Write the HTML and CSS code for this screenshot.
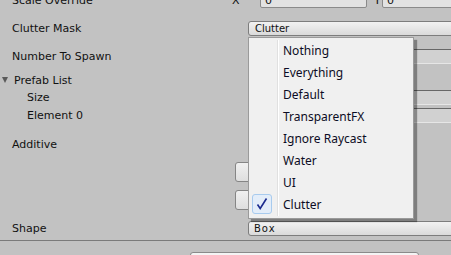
FILE: index.html
```html
<!DOCTYPE html>
<html>
<head>
<meta charset="utf-8">
<link rel="stylesheet" href="styles.css">
</head>
<body>
<div class="inspector">
  <div class="row row-scale">
    <span class="label label-scale">Scale Override</span>
    <span class="axis">X</span>
    <span class="vfield vfield-x">0</span>
    <span class="axis axis-y">Y</span>
    <span class="vfield vfield-y">0</span>
  </div>
  <div class="row row-mask">
    <span class="label">Clutter Mask</span>
    <span class="dropdown">Clutter</span>
  </div>
  <div class="row row-spawn">
    <span class="label">Number To Spawn</span>
    <span class="numfield"></span>
  </div>
  <div class="row row-list">
    <span class="foldout"></span>
    <span class="label label-fold">Prefab List</span>
  </div>
  <div class="row row-size">
    <span class="label label-indent">Size</span>
    <span class="numfield"></span>
  </div>
  <div class="row row-elem">
    <span class="label label-indent">Element 0</span>
    <span class="numfield"></span>
  </div>
  <div class="row row-additive">
    <span class="label">Additive</span>
  </div>
  <div class="buttons">
    <span class="button button-1"></span>
    <span class="button button-2"></span>
  </div>
  <div class="row row-shape">
    <span class="label">Shape</span>
    <span class="dropdown dropdown-box">Box</span>
  </div>
  <div class="separator"></div>
  <div class="bottom-field"></div>
</div>

<div class="popup">
  <div class="item">Nothing</div>
  <div class="item">Everything</div>
  <div class="item">Default</div>
  <div class="item">TransparentFX</div>
  <div class="item">Ignore Raycast</div>
  <div class="item">Water</div>
  <div class="item">UI</div>
  <div class="item item-checked">
    <span class="checkbox">
      <svg width="12" height="14" viewBox="0 0 12 14"><path d="M1.5 7.5 L4.2 11.5 L10.5 1.5" fill="none" stroke="#1b2a8e" stroke-width="1.6" stroke-linejoin="miter"/></svg>
    </span>
    Clutter
  </div>
</div>
</body>
</html>
```
FILE: styles.css
```css
html, body {
  margin: 0;
  padding: 0;
  width: 451px;
  height: 255px;
  overflow: hidden;
  background: #c2c2c2;
}
body {
  font-family: "DejaVu Sans", sans-serif;
  font-size: 11px;
  color: #111;
  position: relative;
}
.inspector {
  width: 480px;
  display: flex;
  flex-direction: column;
  margin-top: -7px;
}
.row {
  display: flex;
  align-items: center;
  box-sizing: border-box;
}
.label {
  width: 236px;
  padding-left: 12px;
  flex: none;
  line-height: 13px;
  white-space: nowrap;
}
.label-scale { width: 220px; }
.label-indent { padding-left: 27px; }
.label-fold { padding-left: 4px; width: 240px; }
.foldout {
  width: 0;
  height: 0;
  margin-left: 2px;
  margin-right: 2px;
  border-left: 3px solid transparent;
  border-right: 3px solid transparent;
  border-top: 6px solid #5a5a5a;
  flex: none;
}
.axis {
  width: 28px;
  flex: none;
  line-height: 13px;
}
.axis-y {
  width: 8px;
  margin-left: 7px;
}
.vfield {
  box-sizing: border-box;
  height: 15px;
  background: #e2e2e2;
  border: 1px solid #8a8a8a;
  border-radius: 2px;
  padding-left: 4px;
  line-height: 13px;
  font-size: 11px;
}
.vfield-x { width: 107px; }
.vfield-y { flex: 1; }

.row-scale { height: 15px; }
.row-mask { height: 15px; margin-top: 13px; }
.row-spawn { height: 15px; margin-top: 13px; }
.row-list { height: 14px; margin-top: 9px; }
.row-size { height: 15px; margin-top: 3px; }
.row-elem { height: 15px; margin-top: 3px; }
.row-additive { height: 15px; margin-top: 14px; }
.row-shape { height: 15px; margin-top: 11px; }

.dropdown {
  box-sizing: border-box;
  flex: 1;
  height: 15px;
  border: 1px solid #7d7d7d;
  border-radius: 3px;
  background: linear-gradient(#f2f2f2, #dadada);
  font-size: 10px;
  line-height: 13px;
  padding-left: 6px;
  color: #111;
}
.dropdown-box {
  letter-spacing: 1px;
  padding-left: 5px;
}
.numfield {
  box-sizing: border-box;
  flex: 1;
  height: 15px;
  background: #d1d1d1;
  border-top: 1px solid #676767;
  border-bottom: 1px solid #e6e6e6;
}
.buttons {
  display: flex;
  flex-direction: column;
  padding-left: 235px;
  margin-top: 10px;
  gap: 8px;
}
.button {
  display: block;
  box-sizing: border-box;
  width: 160px;
  height: 20px;
  border: 1px solid #858585;
  border-radius: 3px;
  background: linear-gradient(#f0f0f0, #dedede);
}
.separator {
  margin-top: 4px;
  height: 1px;
  background: #7b7b7b;
}
.bottom-field {
  box-sizing: border-box;
  margin-top: 11px;
  margin-left: 190px;
  width: 229px;
  height: 12px;
  background: #f4f4f4;
  border: 1px solid #8a8a8a;
  border-radius: 3px;
}

.popup {
  position: absolute;
  left: 248px;
  top: 37px;
  width: 166px;
  height: 182px;
  box-sizing: border-box;
  background: #f0f0f0;
  border: 1px solid #9a9a9a;
  padding: 2px 0;
  box-shadow: 3px 3px 1px rgba(0, 0, 0, 0.35);
  font-family: "Noto Sans", "Open Sans", sans-serif;
  font-size: 12px;
  color: #0c0c24;
}
.popup::before {
  content: "";
  position: absolute;
  left: 28px;
  top: 2px;
  bottom: 2px;
  width: 1px;
  background: #e0e0e0;
  border-right: 1px solid #ffffff;
}
.item {
  position: relative;
  height: 22px;
  line-height: 22px;
  padding-left: 34px;
  white-space: nowrap;
}
.checkbox {
  position: absolute;
  left: 3px;
  top: 0;
  width: 20px;
  height: 20px;
  box-sizing: border-box;
  border: 1px solid #a8cbee;
  border-radius: 3px;
  background: #e3edf9;
  display: flex;
  align-items: center;
  justify-content: center;
}
.checkbox svg { display: block; }
```
